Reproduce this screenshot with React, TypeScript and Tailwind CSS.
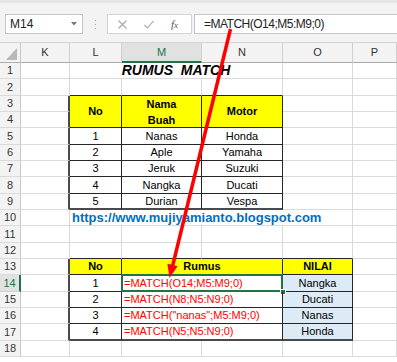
import type { ReactNode } from "react";

type Edge = "g" | "d" | "D";

const R: Record<Edge, string> = {
  g: "border-r border-r-[#dadada]",
  d: "border-r border-r-[#262626]",
  D: "border-r-2 border-r-[#4a4a4a]",
};
const B: Record<Edge, string> = {
  g: "border-b border-b-[#dadada]",
  d: "border-b border-b-[#262626]",
  D: "border-b-2 border-b-[#4a4a4a]",
};
const SPAN: Record<number, string> = { 1: "", 2: "col-span-2", 3: "col-span-3", 4: "col-span-4" };

function Cell({
  r = "g",
  b = "g",
  span = 1,
  tall = false,
  text = "text-[11px] text-black",
  className = "",
  children,
}: {
  r?: Edge;
  b?: Edge;
  span?: number;
  tall?: boolean;
  text?: string;
  className?: string;
  children?: ReactNode;
}) {
  return (
    <div
      className={`${R[r]} ${B[b]} ${SPAN[span]} ${tall ? "row-span-2" : ""} flex items-center whitespace-nowrap ${text} ${className}`}
    >
      {children}
    </div>
  );
}

function RowHead({ n, active = false }: { n: number; active?: boolean }) {
  return active ? (
    <div className="flex items-center justify-center border-r-2 border-r-[#217346] border-b border-b-[#d0d0d0] bg-[#e1e1e1] text-[11px] text-[#217346]">
      {n}
    </div>
  ) : (
    <div className="flex items-center justify-center border-r border-r-[#c8c8c8] border-b border-b-[#dadada] bg-[#f3f3f3] text-[11px] text-[#333]">
      {n}
    </div>
  );
}

const fruits = [
  ["1", "Nanas", "Honda"],
  ["2", "Aple", "Yamaha"],
  ["3", "Jeruk", "Suzuki"],
  ["4", "Nangka", "Ducati"],
  ["5", "Durian", "Vespa"],
];

const formulas = [
  ["1", "=MATCH(O14;M5:M9;0)", "Nangka"],
  ["2", "=MATCH(N8;N5:N9;0)", "Ducati"],
  ["3", '=MATCH("nanas";M5:M9;0)', "Nanas"],
  ["4", "=MATCH(N5;N5:N9;0)", "Honda"],
];

function Blank({ n }: { n: number }) {
  return (
    <>
      <RowHead n={n} />
      <Cell />
      <Cell />
      <Cell />
      <Cell />
      <Cell />
      <Cell />
    </>
  );
}

function FormulaBar() {
  return (
    <div className="h-[43px] bg-[#f3f3f3] border-b border-b-[#d4d4d4]">
      <div className="h-[3px] bg-[#e6e6e6]" />
      <div className="flex items-start pl-[5px] pt-[11px]">
        <div className="w-[78px] h-[20px] bg-white border border-[#c6c6c6] flex items-center justify-between pl-[4px] pr-[5px] text-[12px] text-[#222]">
          <span>M14</span>
          <svg width="6" height="4" viewBox="0 0 6 4">
            <path d="M0 0 L6 0 L3 3.5 Z" fill="#777" />
          </svg>
        </div>
        <div className="w-[24px] h-[20px] flex flex-col items-center justify-center gap-[3px]">
          <span className="w-[1px] h-[1px] bg-[#aaa]" />
          <span className="w-[1px] h-[1px] bg-[#aaa]" />
          <span className="w-[1px] h-[1px] bg-[#aaa]" />
        </div>
        <div className="w-[85px] h-[20px] bg-white border border-[#d4d4d4] flex items-center pl-[10px] gap-[17px]">
          <svg width="9" height="9" viewBox="0 0 9 9">
            <path d="M0.5 0.5 L8.5 8.5 M8.5 0.5 L0.5 8.5" stroke="#a8a8a8" strokeWidth="1.1" />
          </svg>
          <svg width="10" height="9" viewBox="0 0 10 9">
            <path d="M0.5 5 L3.5 8 L9.5 0.8" stroke="#a8a8a8" strokeWidth="1.1" fill="none" />
          </svg>
          <span className="font-['Liberation_Serif',serif] italic text-[11px] text-[#555] leading-none">
            f<span className="text-[9px]">x</span>
          </span>
        </div>
        <div className="ml-[2px] flex-1 h-[20px] -mr-[2px] bg-white border border-[#c6c6c6] flex items-center pl-[9px] text-[12px] tracking-[-0.5px] text-[#222]">
          =MATCH(O14;M5:M9;0)
        </div>
      </div>
    </div>
  );
}

export default function App() {
  return (
    <div className="relative w-[397px] h-[362px] overflow-hidden bg-white font-['Liberation_Sans',Arial,sans-serif]">
      <FormulaBar />
      <div className="grid grid-cols-[21px_49px_52px_80px_81px_70px_1fr] grid-rows-[20px_16px_17px_16px_16px_17px_16px_16px_17px_16px_16px_17px_16px_16px_17px_16px_16px_17px_16px]">
        {/* column headers */}
        <div className="relative border-r border-r-[#c8c8c8] border-b border-b-[#ababab] bg-[#f3f3f3]">
          <svg className="absolute right-[3px] bottom-[2px]" width="11" height="12" viewBox="0 0 11 12">
            <path d="M11 0 L11 12 L0 12 Z" fill="#b8b8b8" />
          </svg>
        </div>
        {["K", "L"].map((c) => (
          <div key={c} className="flex items-center justify-center border-r border-r-[#d0d0d0] border-b border-b-[#ababab] bg-[#f3f3f3] text-[11px] text-[#333]">
            {c}
          </div>
        ))}
        <div className="flex items-center justify-center border-r border-r-[#d0d0d0] border-b-2 border-b-[#217346] bg-[#e1e1e1] text-[11px] text-[#217346]">
          M
        </div>
        {["N", "O", "P"].map((c) => (
          <div key={c} className="flex items-center justify-center border-r border-r-[#d0d0d0] border-b border-b-[#ababab] bg-[#f3f3f3] text-[11px] text-[#333]">
            {c}
          </div>
        ))}

        {/* row 1 */}
        <RowHead n={1} />
        <Cell />
        <Cell span={3} text="text-[14px] text-black" className="justify-center font-bold italic whitespace-pre">
          RUMUS  MATCH
        </Cell>
        <Cell />
        <Cell />

        {/* row 2 */}
        <RowHead n={2} />
        <Cell />
        <Cell b="d" />
        <Cell b="d" />
        <Cell b="d" />
        <Cell />
        <Cell />

        {/* rows 3-4 header */}
        <RowHead n={3} />
        <Cell r="D" />
        <Cell tall r="d" b="d" className="justify-center bg-[#ffff00] font-bold">
          No
        </Cell>
        <Cell tall r="d" b="d" className="flex-col justify-center bg-[#ffff00] font-bold leading-[16px]">
          <span>Nama</span>
          <span>Buah</span>
        </Cell>
        <Cell tall r="d" b="d" className="justify-center bg-[#ffff00] font-bold">
          Motor
        </Cell>
        <Cell />
        <Cell />
        <RowHead n={4} />
        <Cell r="D" />
        <Cell />
        <Cell />

        {/* rows 5-9 */}
        {fruits.map(([no, fruit, motor], i) => {
          const last = i === fruits.length - 1;
          return (
            <div key={no} className="contents">
              <RowHead n={5 + i} />
              <Cell r="D" />
              <Cell r="d" b={last ? "D" : "d"} className="justify-center">
                {no}
              </Cell>
              <Cell r="d" b={last ? "D" : "d"} className="justify-center">
                {fruit}
              </Cell>
              <Cell r="d" b={last ? "D" : "d"} className="justify-center">
                {motor}
              </Cell>
              <Cell />
              <Cell />
            </div>
          );
        })}

        {/* row 10 */}
        <RowHead n={10} />
        <Cell />
        <Cell span={4} text="text-[13px] text-[#0070c0]" className="pl-[2px] font-bold">
          https://www.mujiyamianto.blogspot.com
        </Cell>
        <Cell />

        <Blank n={11} />

        {/* row 12 */}
        <RowHead n={12} />
        <Cell />
        <Cell b="d" />
        <Cell b="d" />
        <Cell b="d" />
        <Cell b="d" />
        <Cell />

        {/* row 13 */}
        <RowHead n={13} />
        <Cell r="D" />
        <Cell r="d" b="d" className="justify-center bg-[#ffff00] font-bold">
          No
        </Cell>
        <Cell span={2} r="d" b="d" className="justify-center bg-[#ffff00] font-bold">
          Rumus
        </Cell>
        <Cell r="d" b="d" className="justify-center bg-[#ffff00] font-bold">
          NILAI
        </Cell>
        <Cell />

        {/* rows 14-17 */}
        {formulas.map(([no, f, v], i) => {
          const last = i === formulas.length - 1;
          return (
            <div key={no} className="contents">
              <RowHead n={14 + i} active={i === 0} />
              <Cell r="D" />
              <Cell r="d" b={last ? "D" : "d"} className="justify-center">
                {no}
              </Cell>
              <Cell
                span={2}
                r="d"
                b={last ? "D" : "d"}
                text="text-[11px] text-[#ff0000]"
                className="relative pl-[2px]"
              >
                {f}
                {i === 0 && (
                  <>
                    <div className="absolute -left-[1px] -top-[1px] -right-[1px] -bottom-[1px] border-2 border-[#217346]" />
                    <div className="absolute -right-[4px] -bottom-[4px] w-[6px] h-[6px] bg-[#217346] border border-white" />
                  </>
                )}
              </Cell>
              <Cell r="d" b={last ? "D" : "d"} className="justify-center bg-[#ddebf7]">
                {v}
              </Cell>
              <Cell />
            </div>
          );
        })}

        <Blank n={18} />
      </div>

      {/* red arrow */}
      <svg className="absolute left-0 top-0 pointer-events-none" width="397" height="362" viewBox="0 0 397 362">
        <line x1="230.5" y1="29" x2="172.6" y2="266" stroke="#ff0000" strokeWidth="3.5" />
        <path d="M169.5 278 L177.6 266.3 L167.4 263.8 Z" fill="#ff0000" />
      </svg>
    </div>
  );
}
